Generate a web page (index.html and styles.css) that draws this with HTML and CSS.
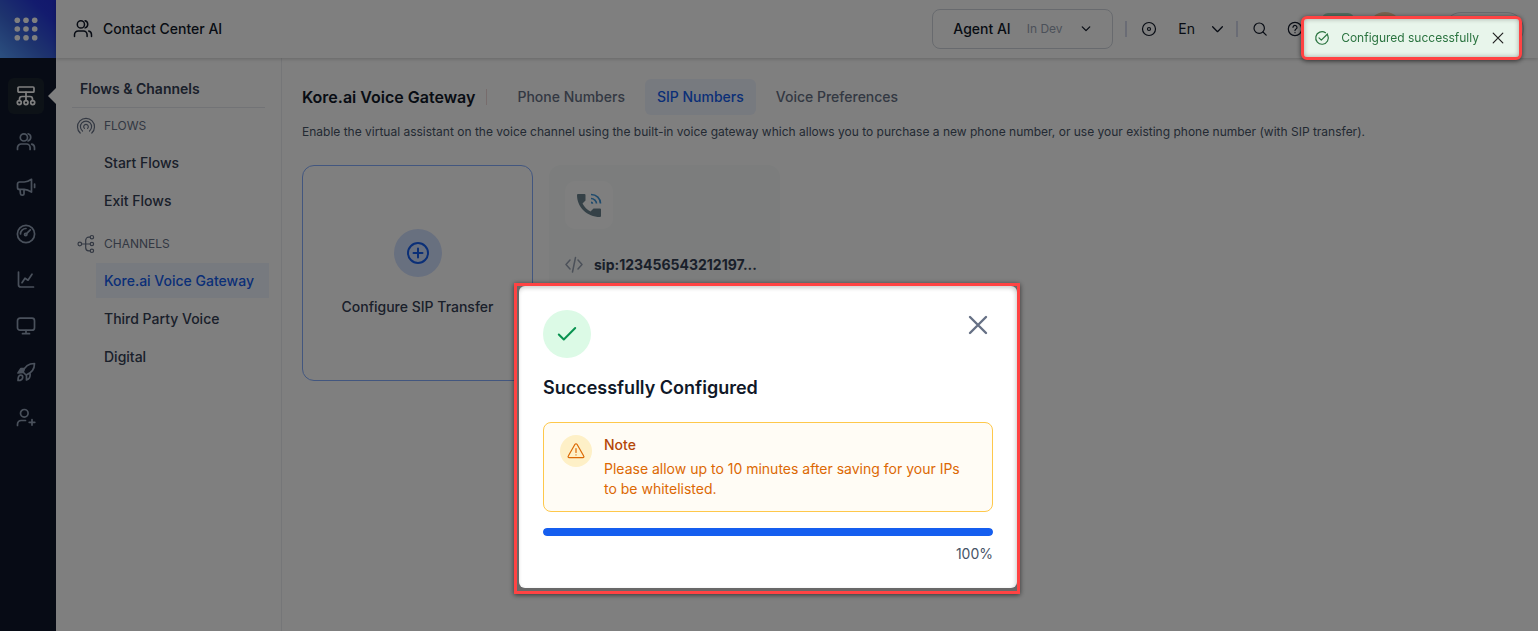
FILE: index.html
```html
<!DOCTYPE html>
<html lang="en">
<head>
<meta charset="utf-8">
<meta name="viewport" content="width=device-width, initial-scale=1">
<title>Contact Center AI</title>
<link rel="stylesheet" href="styles.css">
</head>
<body>
<svg class="defs" aria-hidden="true">
  <symbol id="users" viewBox="0 0 20 20"><path d="M1.5 17.5v-1.8a3.7 3.7 0 0 1 3.7-3.7h5.2a3.7 3.7 0 0 1 3.7 3.7v1.8M18.5 17.5v-1.8a3.7 3.7 0 0 0-2.8-3.6M12.1 1.8a3.7 3.7 0 0 1 0 7.1"/><circle cx="7.9" cy="5.4" r="3.6"/></symbol>
  <symbol id="chevron" viewBox="0 0 12 12"><path d="M1.500 3.500L6 8l4.500-4.500"/></symbol>
  <symbol id="close" viewBox="0 0 20 20"><path d="M2 2l16 16M18 2L2 18"/></symbol>
</svg>

<div class="app">
  <nav class="rail" aria-label="Main">
    <button class="rail-logo" aria-label="Apps">
      <svg width="24" height="24" viewBox="0 0 24 24"><circle cx="3.300" cy="3.200" r="2.800"/><circle cx="12" cy="3.200" r="2.800"/><circle cx="20.700" cy="3.200" r="2.800"/><circle cx="3.300" cy="12" r="2.800"/><circle cx="12" cy="12" r="2.800"/><circle cx="20.700" cy="12" r="2.800"/><circle cx="3.300" cy="20.700" r="2.800"/><circle cx="12" cy="20.700" r="2.800"/><circle cx="20.700" cy="20.700" r="2.800"/></svg>
    </button>
    <div class="rail-items">
      <button class="rail-item active" aria-label="Flows and channels"><svg class="icon" width="20" height="20" viewBox="0 0 20 20"><rect x="2" y="1" width="16" height="5.200" rx="1"/><path d="M10 6.200v8.300M3.500 14.500v-1.500a2.500 2.500 0 0 1 2.500-2.500h8a2.500 2.500 0 0 1 2.500 2.500v1.500"/><circle cx="3.300" cy="16.600" r="2"/><circle cx="10" cy="16.600" r="2"/><circle cx="16.700" cy="16.600" r="2"/></svg></button>
      <button class="rail-item" aria-label="Agents"><svg class="icon" width="20" height="20"><use href="#users"/></svg></button>
      <button class="rail-item" aria-label="Campaigns"><svg class="icon" width="20" height="20" viewBox="0 0 20 20"><path d="M3.500 4h4.700c2.800 0 5.200-1.300 7.300-2.700v12.800c-2.100-1.400-4.500-2.700-7.300-2.700H3.500A2 2 0 0 1 1.500 9.400V6a2 2 0 0 1 2-2zM4 11.500l.5 4.500c.2 1.600 3.500 1.600 3.500 0v-4.600M18.600 6v3.500"/></svg></button>
      <button class="rail-item" aria-label="Dashboard"><svg class="icon" width="20" height="20" viewBox="0 0 20 20"><circle cx="10" cy="10" r="8.600"/><circle cx="9.700" cy="10.500" r="1.200"/><path d="M10.800 9.400l3.500-3.500M4.500 10A5.400 5.400 0 0 1 10 4.500"/></svg></button>
      <button class="rail-item" aria-label="Analytics"><svg class="icon" width="20" height="20" viewBox="0 0 20 20"><path d="M2.500 2v12.700c0 1.500.8 2.300 2.300 2.300H17.500M6 12.700l3-4.500 3 2 4-6"/></svg></button>
      <button class="rail-item" aria-label="Console"><svg class="icon" width="20" height="20" viewBox="0 0 20 20"><rect x="1.500" y="2.200" width="17" height="12" rx="2.500"/><path d="M10 14.500v3M6.500 17.700h7"/></svg></button>
      <button class="rail-item" aria-label="Deploy"><svg class="icon" width="20" height="20" viewBox="0 0 20 20"><path d="M7 10C8.500 5 12.500 1.500 18.500 1.500c0 5.500-3.300 9.700-8.500 11.500zM2 18.500c0-3.500.7-5.300 2.700-5.300a2 2 0 0 1 2 2c0 2-1.500 3.300-4.700 3.300zM10.500 13v5c2.500-.8 4-2 3.600-5.800"/><path class="fill" d="M8 6.500H5L2 11l5-.5z"/></svg></button>
      <button class="rail-item" aria-label="Add user"><svg class="icon" width="20" height="20" viewBox="0 0 20 20"><circle cx="8.300" cy="5.300" r="3.800"/><path d="M1.500 17.500v-1.300c0-2.300 1.500-3.700 3.700-3.700h4.300M16 11.500v5.600M13.200 14.300h5.600"/></svg></button>
    </div>
  </nav>

  <div class="workspace">
    <header class="topbar">
      <svg class="icon" width="20" height="20"><use href="#users"/></svg>
      <span class="product">Contact Center AI</span>
      <button class="agent-picker"><span>Agent AI</span><small>In Dev</small><svg class="icon" width="10" height="10"><use href="#chevron"/></svg></button>
      <div class="tools">
        <span class="divider"></span>
        <button aria-label="Status"><svg class="icon thin" width="16" height="16" viewBox="0 0 16 16"><circle cx="8" cy="8" r="6.500"/><circle cx="8" cy="8" r="1.500"/></svg></button>
        <button class="language">En<svg class="icon thin" width="13" height="13"><use href="#chevron"/></svg></button>
        <span class="divider"></span>
        <button aria-label="Search"><svg class="icon thin" width="16" height="16" viewBox="0 0 16 16"><circle cx="7.200" cy="7.200" r="5.200"/><path d="M11 11l3.200 3.200"/></svg></button>
        <button aria-label="Help"><svg class="icon thin" width="16" height="16" viewBox="0 0 16 16"><circle cx="8" cy="8" r="6.700"/><path d="M6 6.300a2 2 0 1 1 3 1.800c-.7.400-1 .7-1 1.500M8 11.500v.2"/></svg></button>
      </div>
      <div class="account"><span class="badge"></span><span class="avatar"></span><span class="pill"></span></div>
    </header>

    <div class="body">
      <aside class="sidebar">
        <h2>Flows &amp; Channels</h2>
        <h3><svg class="icon light" width="20" height="20" viewBox="0 0 20 20"><path d="M4.200 17A8.500 8.500 0 1 1 15.800 17M6.500 15a5.600 5.600 0 1 1 7 0"/><path d="M8.400 12.400a2.300 2.300 0 1 1 3.200 0"/></svg>FLOWS</h3>
        <a href="#">Start Flows</a>
        <a href="#">Exit Flows</a>
        <h3><svg class="icon light" width="20" height="20" viewBox="0 0 20 20"><circle cx="3.800" cy="10" r="1.800"/><circle cx="15.900" cy="3.200" r="1.700"/><circle cx="15.900" cy="10" r="1.700"/><circle cx="15.900" cy="16.800" r="1.700"/><path d="M5.600 10H14.200M14.200 3.200h-1.500a3 3 0 0 0-3 3v7.600a3 3 0 0 0 3 3H14.200"/></svg>CHANNELS</h3>
        <a class="current" href="#">Kore.ai Voice Gateway</a>
        <a href="#">Third Party Voice</a>
        <a href="#">Digital</a>
      </aside>

      <main>
        <div class="title-row">
          <h1>Kore.ai Voice Gateway</h1>
          <div class="tabs">
            <button>Phone Numbers</button>
            <button class="selected">SIP Numbers</button>
            <button>Voice Preferences</button>
          </div>
        </div>
        <p class="intro">Enable the virtual assistant on the voice channel using the built-in voice gateway which allows you to purchase a new phone number, or use your existing phone number (with SIP transfer).</p>
        <div class="cards">
          <button class="card add-card">
            <span class="add-icon"><svg class="icon" width="24" height="24" viewBox="0 0 24 24"><circle cx="12" cy="12" r="10"/><path d="M12 7.500v9M7.500 12h9"/></svg></span>
            Configure SIP Transfer
          </button>
          <article class="card number-card">
            <span class="phone-icon"><svg width="28" height="28" viewBox="0 0 28 28"><path fill="#6a838f" d="M3 3h6.500q1 0 1 1v5.500l-3 3c2 3.700 4.500 6 8 8l3-3H25q1 0 1 1V25q0 1-1 1C12 26 2 16 2 4q0-1 1-1z"/><path fill="none" stroke="#3f97db" stroke-width="1.700" d="M16 3.500c5.500 0 9.500 4 9.500 9M16 7.500c3 0 5.500 2.500 5.500 5M16 11.300q1.400 0 1.500 1.500"/></svg></span>
            <div class="sip"><svg class="icon" width="18" height="18" viewBox="0 0 18 18"><path d="M5 4L1 8.500 5 13M13 4l4 4.500L13 13M10.500 1.500l-3 14.500"/></svg><strong>sip:123456543212197...</strong></div>
          </article>
        </div>
      </main>
    </div>
  </div>
</div>

<div class="overlay">
  <div class="frame">
    <section class="modal" role="dialog" aria-modal="true" aria-labelledby="modal-title">
      <div class="modal-top">
        <span class="success"><svg class="icon" width="24" height="24" viewBox="0 0 24 24"><path d="M3.800 12.500l5 5L20.200 6"/></svg></span>
        <button aria-label="Close"><svg class="icon" width="20" height="20"><use href="#close"/></svg></button>
      </div>
      <h2 id="modal-title">Successfully Configured</h2>
      <div class="note">
        <span class="warning"><svg class="icon" width="18" height="18" viewBox="0 0 18 18"><path d="M8 2.300L1.300 14a1 1 0 0 0 .9 1.600h13.600a1 1 0 0 0 .9-1.600L10 2.300a1.200 1.200 0 0 0-2 0zM9 6.500v4M9 12.800v.2"/></svg></span>
        <div><h3>Note</h3><p>Please allow up to 10 minutes after saving for your IPs to be whitelisted.</p></div>
      </div>
      <progress value="100" max="100" aria-labelledby="progress-value"></progress>
      <p class="percent" id="progress-value">100%</p>
    </section>
  </div>
</div>

<div class="toast" role="status">
  <svg class="icon" width="16" height="16" viewBox="0 0 16 16"><path d="M13.700 5.200A6.300 6.300 0 1 1 11.500 2.700M5 7.800l2.300 2.300L13.500 4"/></svg>
  <span>Configured successfully</span>
  <button aria-label="Dismiss"><svg class="icon" width="12" height="12"><use href="#close"/></svg></button>
</div>
</body>
</html>
```
FILE: styles.css
```css
* { box-sizing: border-box; }
body { margin: 0; font: 14px/20px Inter, sans-serif; color: #344054; background: #fff; }
button { font: inherit; color: inherit; border: 0; padding: 0; background: none; }
h1, h2, h3, p { margin: 0; }
a { color: inherit; text-decoration: none; }
svg { display: block; flex: none; }
.defs { position: absolute; width: 0; height: 0; }
.icon { fill: none; stroke: currentColor; stroke-width: 1.500; stroke-linecap: round; stroke-linejoin: round; }
.icon .fill { fill: currentColor; }
.icon.thin { stroke-width: 1.200; }
.icon.light { stroke-width: 1.200; }

.app { display: flex; min-height: 100vh; }
.workspace { flex: 1; min-width: 0; display: flex; flex-direction: column; }

.rail { width: 56px; flex: none; background: #0f172a; }
.rail-logo { width: 56px; height: 58px; padding: 16px 14px; background: linear-gradient(45deg, #58a0ff, #3c68dc 40%, #2636dc 80%, #2430d8); }
.rail-logo svg { fill: #fff; }
.rail-items { display: flex; flex-direction: column; gap: 10px; padding: 20px 8px; }
.rail-item { width: 36px; height: 36px; display: grid; place-items: center; border-radius: 6px; color: #94a3b8; }
.rail-item svg { stroke-width: 1.700; }
.rail-item.active { position: relative; background: #1a242f; color: #fff; }
.rail-item.active::after { content: ""; position: absolute; right: -12px; top: 10px; border: 8px solid transparent; border-left: 0; border-right-color: #fff; }

.topbar { height: 58px; display: flex; align-items: center; padding: 0 14px 0 17px; color: #101828; box-shadow: 0 1px 4px rgba(0, 0, 0, .2); position: relative; }
.product { margin-left: 10px; font-weight: 500; }
.agent-picker { margin-left: auto; width: 181px; height: 40px; padding: 0 20px; display: flex; align-items: center; border: 1px solid #d0d5dd; border-radius: 8px; font-weight: 500; }
.agent-picker small { margin-left: 16px; font-size: 12px; line-height: 20px; font-weight: 400; color: #98a2b3; }
.agent-picker svg { margin-left: 18px; }
.tools { display: flex; align-items: center; margin-left: 12px; }
.divider { width: 2px; height: 16px; background: #d5d9eb; }
.tools button { margin-left: 14px; }
.tools .language { display: flex; align-items: center; gap: 16px; margin: 0 12px 0 21px; }
.tools button:last-child { margin-left: 19px; }
.account { display: flex; align-items: center; gap: 14px; margin-left: 19px; }
.badge { width: 32px; height: 32px; border-radius: 6px; background: #a5dcc0; }
.avatar { width: 34px; height: 34px; margin-right: 28px; border-radius: 50%; background: #f5c9a0; }
.pill { width: 80px; height: 34px; border: 1px solid #d0d5dd; border-radius: 17px; }

.body { flex: 1; display: flex; }
.sidebar { width: 226px; flex: none; border-right: 1px solid #eaecf0; padding: 20px 12px 20px 16px; display: flex; flex-direction: column; }
.sidebar h2 { font-size: 14px; line-height: 20px; font-weight: 600; padding: 1px 8px 8px; margin-right: 4px; border-bottom: 1px solid #e4e7ec; }
.sidebar h3 { display: flex; align-items: center; gap: 8px; padding-left: 4px; margin: 8px 0; font-size: 12px; line-height: 20px; font-weight: 400; color: #667085; }
.sidebar a { margin: 1px 0 2px 24px; padding: 8px; line-height: 19px; font-weight: 500; }
.sidebar a + h3 { margin-top: 14px; }
.sidebar .current { background: #eff4ff; color: #155eef; }

main { flex: 1; min-width: 0; padding: 21px 20px; }
.title-row { display: flex; align-items: center; }
h1 { font-size: 16px; line-height: 16px; font-weight: 600; color: #101828; padding-right: 11px; border-right: 1px solid #eed8d8; }
.tabs { display: flex; gap: 8px; margin-left: 18px; }
.tabs button { height: 36px; padding: 0 12px; border-radius: 6px; font-weight: 500; color: #667085; }
.tabs .selected { background: #eff4ff; color: #155eef; }
.intro { margin-top: 7px; font-size: 12px; line-height: 20px; color: #475467; }
.cards { display: flex; gap: 16px; margin-top: 23px; }
.card { width: 231px; height: 216px; border-radius: 12px; }
.add-card { display: flex; flex-direction: column; align-items: center; justify-content: center; gap: 20px; border: 1px solid #84adff; font-weight: 500; }
.add-icon { width: 48px; height: 48px; display: grid; place-items: center; border-radius: 50%; background: #d1e0ff; color: #155eef; }
.add-icon svg { stroke-width: 2; }
.number-card { padding: 16px; background: #f8fbfa; }
.phone-icon { width: 48px; height: 48px; display: grid; place-items: center; border-radius: 10px; background: #fff; }
.sip { display: flex; align-items: center; gap: 11px; margin-top: 26px; color: #98a2b3; }
.sip strong { font-weight: 700; color: #344054; }

.overlay { position: fixed; inset: 0; display: flex; justify-content: center; align-items: flex-start; padding: 283px 4px 0 0; background: rgba(0, 0, 0, .5); }
.frame { width: 506px; border: 3px solid #ff4343; padding: 0 0 3px 2px; background: #686868; box-shadow: 0 1px 5px rgba(0, 0, 0, .6); }
.modal { padding: 24px; background: #fff; border-radius: 6px; box-shadow: inset -1px 2px 4px rgba(0, 0, 0, .2); }
.modal-top { display: flex; justify-content: space-between; align-items: flex-start; }
.modal-top button { padding: 5px; color: #667085; }
.modal-top button svg { stroke-width: 2.400; }
.success { width: 48px; height: 48px; display: grid; place-items: center; border-radius: 50%; background: #dcfae6; color: #099250; }
.success svg { stroke-width: 2; }
.modal h2 { margin-top: 16px; font-size: 18px; line-height: 28px; font-weight: 600; color: #101828; }
.note { display: flex; gap: 12px; margin-top: 20px; padding: 12px 16px; border: 1px solid #fec84b; border-radius: 8px; background: #fffcf5; color: #dc6803; }
.warning { width: 32px; height: 32px; flex: none; display: grid; place-items: center; border-radius: 50%; background: #fef0c7; }
.warning svg { stroke-width: 1.200; }
.note h3 { font-size: 14px; line-height: 20px; font-weight: 500; color: #b54708; margin-bottom: 4px; }
progress { display: block; appearance: none; width: 100%; height: 8px; margin-top: 16px; border: 0; border-radius: 4px; overflow: hidden; background: #eaecf0; }
progress::-webkit-progress-bar { background: #eaecf0; }
progress::-webkit-progress-value { background: #155eef; border-radius: 4px; }
.percent { margin-top: 8px; text-align: right; color: #475467; }

.toast { position: fixed; top: 16px; right: 16px; height: 44px; display: flex; align-items: center; padding: 0 15px 0 10px; border: 3px solid #ff4343; border-radius: 6px; background: #e8f5eb; color: #2b7440; font-size: 12px; box-shadow: 0 1px 5px rgba(0, 0, 0, .6), inset 0 0 5px rgba(0, 0, 0, .3); }
.toast span { margin: 0 13px 0 11px; }
.toast svg { stroke-width: 1.200; }
.toast button { color: #202020; }
.toast button svg { stroke-width: 2; }
```
